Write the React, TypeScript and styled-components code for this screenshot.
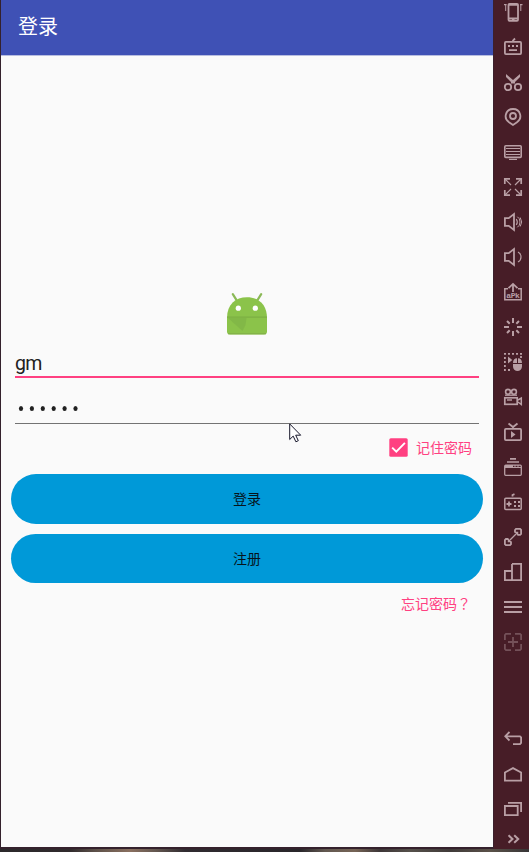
import React, { useState } from 'react';
import styled, { createGlobalStyle } from 'styled-components';

const GlobalStyle = createGlobalStyle`
  * { box-sizing: border-box; }
  body { margin: 0; overflow: hidden; }
  button, input { font: inherit; border: 0; padding: 0; }
`;

const Desktop = styled.div`
  width: 529px;
  height: 852px;
  display: flex;
  flex-direction: column;
  background: #34212c;
  font-family: 'Noto Sans', 'Noto Sans CJK SC', sans-serif;
`;

const Emulator = styled.div`
  display: flex;
  height: 849px;
`;

const Screen = styled.main`
  width: 492px;
  height: 847px;
  margin-left: 1px;
  background: #fafafa;
`;

const AppBar = styled.header`
  height: 55px;
  padding: 0 17px 4px;
  display: flex;
  align-items: center;
  background: #3f51b5;
  box-shadow: 0 1px 0 #b7bde0;
`;

const Title = styled.h1`
  margin: 0;
  color: #fff;
  font: 400 20px/24px 'Noto Sans CJK SC', sans-serif;
`;

const Form = styled.form`
  display: flex;
  flex-direction: column;
  padding: 237px 10px 0;
`;

const Logo = styled.svg`
  width: 42px;
  height: 44px;
  margin-left: 215px;
`;

const Field = styled.div<{ $focused?: boolean }>`
  height: ${p => (p.$focused ? 42 : 46)}px;
  margin: 0 4px;
  display: flex;
  align-items: flex-end;
  border-bottom: ${p => (p.$focused ? '2px solid #ff4081' : '1px solid #737373')};
`;

const NameInput = styled.input`
  width: 100%;
  height: 28px;
  padding-top: 2px;
  background: transparent;
  outline: none;
  color: #212121;
  font: 400 19.5px/26px Roboto, sans-serif;
  letter-spacing: -0.6px;
`;

const Mask = styled.svg`
  width: 80px;
  height: 30px;
  fill: #212121;
`;

const Remember = styled.label`
  display: flex;
  align-items: center;
  align-self: flex-end;
  height: 20px;
  margin: 13px 11px 0 0;
  gap: 8px;
  color: #ff4081;
  font: 400 14px/20px 'Noto Sans CJK SC', sans-serif;
`;

const Checkbox = styled.svg`
  width: 19px;
  height: 19px;
`;

const Pill = styled.button`
  height: 49px;
  border-radius: 25px;
  margin-top: 10px;
  background: #0099d8;
  color: #06141c;
  font: 400 14px/20px 'Noto Sans CJK SC', sans-serif;
  &:first-of-type {
    height: 50px;
    margin-top: 16.5px;
    padding-bottom: 1px;
  }
`;

const Forgot = styled.a`
  align-self: flex-end;
  margin: 10px 12px 0 0;
  color: #ff4081;
  font: 400 14px/20px 'Noto Sans CJK TC', sans-serif;
`;

const Rail = styled.nav`
  width: 36px;
  height: 849px;
  padding: 3px 0 0 10px;
  background: #471d27;
  border-left: 1px solid #3b202d;
  display: flex;
  flex-direction: column;
  gap: 17px;
`;

const NavKeys = styled.div`
  display: flex;
  flex-direction: column;
  gap: 17px;
  margin-top: 62px;
`;

const Icon = styled.svg<{ $dim?: boolean; $tight?: boolean }>`
  flex: none;
  width: 18px;
  height: 18px;
  overflow: visible;
  fill: none;
  stroke: #b99fa5;
  stroke-width: 1.8;
  opacity: ${p => (p.$dim ? 0.4 : 1)};
  margin-top: ${p => (p.$tight ? '-5px' : '0')};
  .solid { fill: #b99fa5; stroke: none; }
  .thin { stroke-width: 1; }
  text { fill: #b99fa5; stroke: none; font: 700 8px 'Liberation Mono', monospace; }
`;

const Wallpaper = styled.div`
  height: 3px;
  background: linear-gradient(90deg, #2b292b 0, #302a2c 70px, #5c5048 95px, #8a7060 130px, #655850 155px, #302b30 185px, #29262a 300px, #625850 325px, #766456 355px, #3d3637 380px, #55504a 410px, #403a39 450px, #5a5148 490px, #373536 529px);
`;

const Cursor = styled.svg`
  position: absolute;
  left: 289px;
  top: 423px;
  width: 13px;
  height: 20px;
`;

const tools: { name: string; dim?: boolean; art: React.ReactNode }[] = [
  { name: 'rotate', art: <><rect x="4.5" y=".8" width="9.5" height="17" rx="1" /><path d="M4 1.8h10M4 15.5h10" /><path className="solid" d="M8 15h2.5v2H8z" /><path d="M0 1.7h2.5M16 1.7h2.5" strokeWidth="1.3" /><path className="thin" d="M1.7 1v7M16.8 1v7" /></> },
  { name: 'keyboard', art: <><rect x=".9" y="3.9" width="16.2" height="12.2" rx="1" /><path d="M9 4V2.5L11 .5" /><path className="solid" d="M4 7h2v2H4zM8 7h2v2H8zM12 7h2v2h-2zM5 11.3h8V13H5z" /></> },
  { name: 'cut', art: <><circle cx="4" cy="14" r="3.2" /><circle cx="14" cy="14" r="3.2" /><path className="solid" d="M2 1l7 6 7-6v3l-5 5v1.5H7V9L2 4z" /></> },
  { name: 'location', art: <><path d="M9 17 5 14.2C-.8 10.5 1.3 1 9 1s9.8 9.5 4 13.2z" /><circle cx="9" cy="8" r="3" /></> },
  { name: 'screen', art: <><rect x=".8" y="2.8" width="16.4" height="11.6" rx="1" strokeWidth="1.6" /><path className="thin" d="M2 5.5h14M2 8.5h14M2 11.5h14" /><path d="M5 16.4h8" strokeWidth="1.2" /></> },
  { name: 'fullscreen', art: <><path strokeWidth="1.7" d="M.8 6V.8H6M12 .8h5.2V6M17.2 12v5.2H12M6 17.2H.8V12" /><path strokeWidth="1.2" d="M1 1l6 6M17 1l-6 6M17 17l-6-6M1 17l6-6" /></> },
  { name: 'volume up', art: <><path d="M.9 5.2h3.8L10 1v16l-5.3-4.2H.9z" /><path d="M12.3 6q2 3 0 6" strokeWidth="1.2" /><path className="thin" d="M13.3 3.7q2.7 1.5 2.7 5.3t-2.7 5.3M16.2 4.5q3 4.5 0 9" /></> },
  { name: 'volume down', art: <><path d="M.9 5.2h3.8L10 1v16l-5.3-4.2H.9z" /><path d="M14 4q3 1.5 3 5t-3 5" strokeWidth="1.2" /></> },
  { name: 'install', art: <><path d="M.8 5v11.7h16.4V5M.8 5.7H4M14 5.7h3.2" strokeWidth="1.5" /><path d="M9 9V1M4.5 5.2 9 .9l4.5 4.3" /><text x="2.3" y="14.5" textLength="13.5">aPk</text></> },
  { name: 'shake', art: <path strokeWidth="2" d="M9 0v5M9 13v5M0 9h5M13 9h5M3 3l2.7 2.7M12.3 12.3 15 15M15 3l-2.7 2.7M5.7 12.3 3 15" /> },
  { name: 'record actions', art: <><path strokeDasharray="2 2" d="M0 .9h18M.9 4v14M4 17h3M17 3v2" /><path className="solid" d="M4 3.5 8.3 7 4 10.5zM9 11h9v2.5a4.5 4.5 0 0 1-9 0zM9 10c0-3 1.5-4.7 4-4.7V10zM14 5.3c2.5 0 4 1.7 4 4.7h-4z" /></> },
  { name: 'record video', art: <><circle cx="4" cy="3.8" r="2.4" strokeWidth="1.6" /><circle cx="10" cy="3.8" r="2.4" strokeWidth="1.6" /><path d="M1 7.2h12" strokeWidth="1.3" /><rect x=".8" y="9.8" width="12.4" height="6.5" strokeWidth="1.7" /><path d="M3 12h5" strokeWidth="1.4" /><path d="M14 12l3.3-2v6.5L14 14" strokeWidth="1.5" /></> },
  { name: 'television', art: <><rect x=".9" y="5.9" width="16.2" height="11.2" rx="1" /><path d="M4.5.5 9 4l4.5-3.5M9 4v2" /><path className="solid" d="M7 8v7l4.5-3.5z" /></> },
  { name: 'windows', art: <><path d="M6 .9h6M3 4h12" strokeWidth="1.6" /><rect x=".7" y="7.2" width="16.6" height="10.1" rx="1" strokeWidth="1.3" /><path className="solid" d="M1 7h8v3H1z" /><path className="thin" d="M1 9.5h16M11 7v3M14 7v3" /></> },
  { name: 'gamepad', art: <><rect x=".8" y="5.3" width="16.4" height="11.2" rx="1" strokeWidth="1.5" /><path d="M8.5 3.5V2l2-.8M2.5 11h5M5 8.5v5" /><path className="solid" d="M10 8h2v2h-2zM14 8h2v2h-2zM10 12h2v2h-2zM14 12h2v2h-2z" /></> },
  { name: 'scale', art: <><path d="M11 4V2l1-1.1h4.1l1 1v4l-1 1H14M4 11H1.9l-1 1v4.1l1 1H6l1-1V14" /><path d="m4.5 13.5 9-9M10.4 4.4h3.2v3.2M4.4 10.4v3.2h3.2" strokeWidth="1.3" /></> },
  { name: 'multi window', art: <path d="M8 .9h9.1v16.2H.9V8H8M8 .9v16.2" /> },
  { name: 'menu', art: <path d="M0 4h18M0 9h18M0 14h18" /> },
  { name: 'add region', dim: true, art: <path d="M.9 7V2l1-1.1H7M11 .9h5l1.1 1V7M17.1 11v5l-1.1 1.1h-5M7 17.1H2L.9 16v-5M4 9h10M9 4v10" /> },
];

const keys: { name: string; tight?: boolean; art: React.ReactNode }[] = [
  { name: 'back', art: <path d="M5.5 2 1.3 6.3l4.2 4.2M1.5 6.3H16l1.1 1v5.5l-1.1 1.3H9" /> },
  { name: 'home', art: <path d="M.9 15.7V7.5L9 3.1l8.1 4.4v8.2z" /> },
  { name: 'recent', art: <path d="M.9 6h12.8v9.2H.9zM4 2.9h13.1V12" /> },
  { name: 'more', tight: true, art: <path d="m4.5 5.3 4 3.7-4 3.7M10.2 5.3l4 3.7-4 3.7" strokeWidth="2" /> },
];

export default function App() {
  const [name, setName] = useState('gm');
  return (
    <Desktop>
      <GlobalStyle />
      <Emulator>
        <Screen>
          <AppBar><Title>登录</Title></AppBar>
          <Form onSubmit={e => e.preventDefault()}>
            <Logo viewBox="0 0 42 44">
              <path d="m6.8 2.2 5 8M35.2 2.2l-5 8" stroke="#8bb957" strokeWidth="2.2" strokeLinecap="round" />
              <path d="M1 26C1 12.5 9.5 5.2 21 5.2S41 12.5 41 26v13.5a3 3 0 0 1-3 3H4a3 3 0 0 1-3-3z" fill="#8bc34a" />
              <path d="M1 24.4h40v1.4H1z" fill="#7daf43" />
              <path d="m2 26 14.5 13 3-6 1-7z" fill="#7fb446" opacity=".7" />
              <path d="M2 41.8h38" stroke="#80ad48" strokeWidth="1" />
              <circle cx="12.3" cy="16.2" r="2.6" fill="#fff" />
              <circle cx="29.3" cy="16.2" r="2.6" fill="#fff" />
            </Logo>
            <Field $focused>
              <NameInput value={name} onChange={e => setName(e.target.value)} />
            </Field>
            <Field>
              <Mask viewBox="0 0 80 30">
                {[0, 1, 2, 3, 4, 5].map(i => (
                  <ellipse key={i} cx={6 + i * 10.9} cy="15.5" rx="2.1" ry="2.5" />
                ))}
              </Mask>
            </Field>
            <Remember>
              <Checkbox viewBox="0 0 19 19">
                <rect x=".3" y=".3" width="18.4" height="18.4" rx="1.5" fill="#ff4081" />
                <path d="m3.2 9.6 4.1 4.1 8.6-8.8" fill="none" stroke="#fff" strokeWidth="1.9" />
              </Checkbox>
              记住密码
            </Remember>
            <Pill type="submit">登录</Pill>
            <Pill type="button">注册</Pill>
            <Forgot>忘记密码？</Forgot>
          </Form>
        </Screen>
        <Rail>
          {tools.map(t => (
            <Icon key={t.name} viewBox="0 0 18 18" $dim={t.dim} aria-label={t.name}>{t.art}</Icon>
          ))}
          <NavKeys>
            {keys.map(k => (
              <Icon key={k.name} viewBox="0 0 18 18" $tight={k.tight} aria-label={k.name}>{k.art}</Icon>
            ))}
          </NavKeys>
        </Rail>
      </Emulator>
      <Wallpaper />
      <Cursor viewBox="0 0 13 20">
        <path d="M.7.9v15.6l3.5-3.4 2.7 5.7 2.4-1.1-2.6-5.5h5z" fill="#fff" stroke="#17172b" strokeWidth="1" />
      </Cursor>
    </Desktop>
  );
}
